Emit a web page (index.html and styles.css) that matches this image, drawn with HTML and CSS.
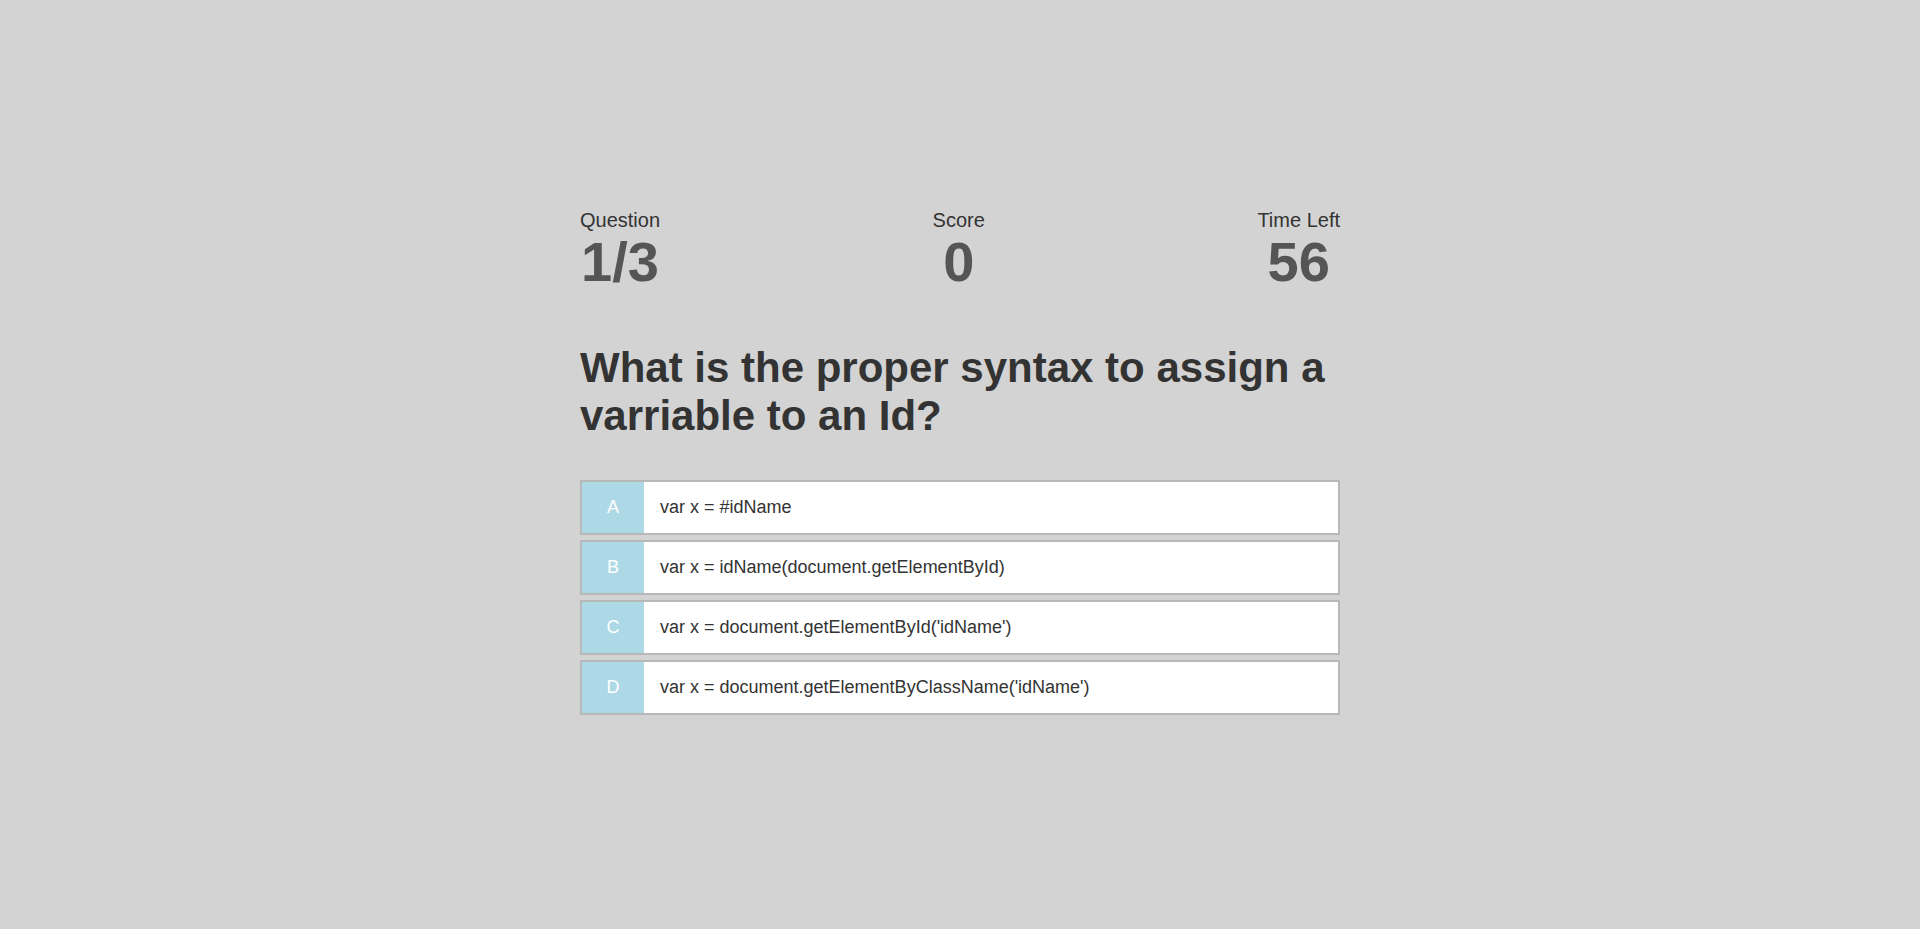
FILE: index.html
```html
<!DOCTYPE html>
<html lang="en">
<head>
<meta charset="utf-8">
<title>Quiz</title>
<link rel="stylesheet" href="styles.css">
</head>
<body>
<div class="container">
  <div class="game">
    <div class="hud">
      <div class="hud-item">
        <p class="hud-label">Question</p>
        <p class="hud-value">1/3</p>
      </div>
      <div class="hud-item">
        <p class="hud-label">Score</p>
        <p class="hud-value">0</p>
      </div>
      <div class="hud-item">
        <p class="hud-label">Time Left</p>
        <p class="hud-value">56</p>
      </div>
    </div>
    <h2 class="question">What is the proper syntax to assign a varriable to an Id?</h2>
    <div class="choice">
      <p class="choice-prefix">A</p>
      <p class="choice-text">var x = #idName</p>
    </div>
    <div class="choice">
      <p class="choice-prefix">B</p>
      <p class="choice-text">var x = idName(document.getElementById)</p>
    </div>
    <div class="choice">
      <p class="choice-prefix">C</p>
      <p class="choice-text">var x = document.getElementById('idName')</p>
    </div>
    <div class="choice">
      <p class="choice-prefix">D</p>
      <p class="choice-text">var x = document.getElementByClassName('idName')</p>
    </div>
  </div>
</div>
</body>
</html>
```

FILE: styles.css
```css
* {
  box-sizing: border-box;
}

html, body {
  margin: 0;
  padding: 0;
}

body {
  background: #d3d3d3;
  color: #333;
  font-family: "Liberation Sans", Arial, sans-serif;
  min-height: 929px;
}

.container {
  width: 760px;
  margin: 0 auto;
  min-height: 929px;
  display: flex;
  flex-direction: column;
  justify-content: center;
}

.game {
  display: flex;
  flex-direction: column;
}

.hud {
  display: flex;
  justify-content: space-between;
}

.hud-item {
  display: flex;
  flex-direction: column;
  align-items: center;
}

.hud-label {
  margin: 0;
  font-size: 20px;
  color: #333;
}

.hud-value {
  margin: -3px 0 0;
  font-size: 56px;
  font-weight: bold;
  color: #555;
}

.question {
  margin: 50px 0 40px;
  font-size: 42px;
  font-weight: bold;
  color: #333;
}

.choice {
  display: flex;
  align-items: stretch;
  height: 55px;
  margin-bottom: 5px;
  border: 2px solid #b8b8b8;
  background: #fff;
  font-size: 18px;
}

.choice-prefix {
  margin: 0;
  width: 62px;
  background: #add8e6;
  color: #fff;
  display: flex;
  align-items: center;
  justify-content: center;
}

.choice-text {
  margin: 0;
  padding-left: 16px;
  display: flex;
  align-items: center;
  color: #333;
}
```
